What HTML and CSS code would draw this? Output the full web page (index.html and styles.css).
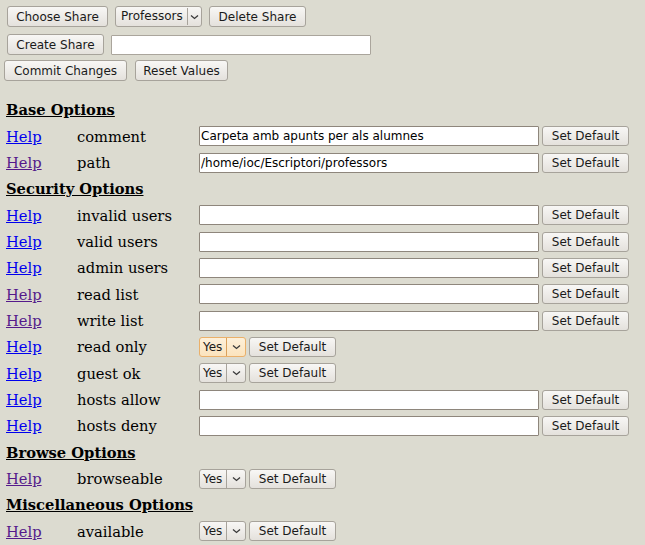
FILE: index.html
```html
<!DOCTYPE html>
<html>
<head>
<meta charset="utf-8">
<title>SWAT Shares</title>
<link rel="stylesheet" href="styles.css">
</head>
<body>
<form class="page">
  <div class="toolbar">
    <div class="tb-row tb-row1">
      <button type="button" class="btn w-choose">Choose Share</button>
      <span class="sel sel-share"><span class="sel-text">Professors</span><span class="sel-arrow"><svg width="9" height="6" viewBox="0 0 9 6"><path d="M1 1.5 L4.5 4.5 L8 1.5" fill="none" stroke="#3a3a3a" stroke-width="1.3"/></svg></span></span>
      <button type="button" class="btn w-delete">Delete Share</button>
    </div>
    <div class="tb-row tb-row2">
      <button type="button" class="btn w-create">Create Share</button>
      <input type="text" class="txt txt-new">
    </div>
    <div class="tb-row tb-row3">
      <button type="button" class="btn w-commit">Commit Changes</button>
      <button type="button" class="btn w-reset">Reset Values</button>
    </div>
  </div>

  <div class="params">
    <div class="sect"><b><u>Base Options</u></b></div>
    <a class="help" href="#h1">Help</a><span class="pname">comment</span>
    <div class="pval"><input type="text" class="txt txt-wide" value="Carpeta amb apunts per als alumnes"><button type="button" class="btn btn-def">Set Default</button></div>
    <a class="help visited" href="#h2">Help</a><span class="pname">path</span>
    <div class="pval"><input type="text" class="txt txt-wide" value="/home/ioc/Escriptori/professors"><button type="button" class="btn btn-def">Set Default</button></div>

    <div class="sect"><b><u>Security Options</u></b></div>
    <a class="help" href="#h3">Help</a><span class="pname">invalid users</span>
    <div class="pval"><input type="text" class="txt txt-wide"><button type="button" class="btn btn-def">Set Default</button></div>
    <a class="help" href="#h4">Help</a><span class="pname">valid users</span>
    <div class="pval"><input type="text" class="txt txt-wide"><button type="button" class="btn btn-def">Set Default</button></div>
    <a class="help" href="#h5">Help</a><span class="pname">admin users</span>
    <div class="pval"><input type="text" class="txt txt-wide"><button type="button" class="btn btn-def">Set Default</button></div>
    <a class="help visited" href="#h6">Help</a><span class="pname">read list</span>
    <div class="pval"><input type="text" class="txt txt-wide"><button type="button" class="btn btn-def">Set Default</button></div>
    <a class="help visited" href="#h7">Help</a><span class="pname">write list</span>
    <div class="pval"><input type="text" class="txt txt-wide"><button type="button" class="btn btn-def">Set Default</button></div>
    <a class="help" href="#h8">Help</a><span class="pname">read only</span>
    <div class="pval"><span class="sel sel-yn sel-hot"><span class="sel-text">Yes</span><span class="sel-arrow"><svg width="9" height="6" viewBox="0 0 9 6"><path d="M1 1.5 L4.5 4.5 L8 1.5" fill="none" stroke="#3a3a3a" stroke-width="1.3"/></svg></span></span><button type="button" class="btn btn-def">Set Default</button></div>
    <a class="help" href="#h9">Help</a><span class="pname">guest ok</span>
    <div class="pval"><span class="sel sel-yn"><span class="sel-text">Yes</span><span class="sel-arrow"><svg width="9" height="6" viewBox="0 0 9 6"><path d="M1 1.5 L4.5 4.5 L8 1.5" fill="none" stroke="#3a3a3a" stroke-width="1.3"/></svg></span></span><button type="button" class="btn btn-def">Set Default</button></div>
    <a class="help" href="#h10">Help</a><span class="pname">hosts allow</span>
    <div class="pval"><input type="text" class="txt txt-wide"><button type="button" class="btn btn-def">Set Default</button></div>
    <a class="help" href="#h11">Help</a><span class="pname">hosts deny</span>
    <div class="pval"><input type="text" class="txt txt-wide"><button type="button" class="btn btn-def">Set Default</button></div>

    <div class="sect"><b><u>Browse Options</u></b></div>
    <a class="help visited" href="#h12">Help</a><span class="pname">browseable</span>
    <div class="pval"><span class="sel sel-yn"><span class="sel-text">Yes</span><span class="sel-arrow"><svg width="9" height="6" viewBox="0 0 9 6"><path d="M1 1.5 L4.5 4.5 L8 1.5" fill="none" stroke="#3a3a3a" stroke-width="1.3"/></svg></span></span><button type="button" class="btn btn-def">Set Default</button></div>

    <div class="sect"><b><u>Miscellaneous Options</u></b></div>
    <a class="help visited" href="#h13">Help</a><span class="pname">available</span>
    <div class="pval"><span class="sel sel-yn"><span class="sel-text">Yes</span><span class="sel-arrow"><svg width="9" height="6" viewBox="0 0 9 6"><path d="M1 1.5 L4.5 4.5 L8 1.5" fill="none" stroke="#3a3a3a" stroke-width="1.3"/></svg></span></span><button type="button" class="btn btn-def">Set Default</button></div>
  </div>
</form>
</body>
</html>
```

FILE: styles.css
```css
html, body {
  margin: 0;
  padding: 0;
  background: #dcdbd0;
}
body {
  font-family: "DejaVu Serif", serif;
  font-size: 14.7px;
  color: #000;
}
.page {
  margin: 0;
}
.toolbar {
  display: flex;
  flex-direction: column;
  padding-top: 6px;
}
.tb-row {
  display: flex;
  align-items: center;
  gap: 7px;
}
.tb-row1 { padding-left: 7px; height: 21px; }
.tb-row2 { padding-left: 7px; height: 21px; margin-top: 7px; }
.tb-row3 { padding-left: 4px; height: 21px; margin-top: 5px; gap: 8px; }

.btn {
  font-family: "DejaVu Sans", sans-serif;
  font-size: 12px;
  color: #1a1a1a;
  height: 21px;
  padding: 0;
  margin: 0;
  border: 1px solid #a7a39b;
  border-radius: 3px;
  background: linear-gradient(#f8f7f5, #e4e1dc);
  box-sizing: border-box;
  line-height: 18px;
}
.w-choose { width: 101px; }
.w-delete { width: 97px; }
.w-create { width: 97px; }
.w-commit { width: 123px; }
.w-reset { width: 93px; }
.txt {
  font-family: "DejaVu Sans", sans-serif;
  font-size: 12px;
  color: #000;
  height: 20px;
  margin: 0;
  padding: 0 1px;
  border: 1px solid #8e867c;
  border-radius: 1px;
  background: #fff;
  box-sizing: border-box;
  outline: none;
}
.txt-new {
  width: 260px;
  border-color: #aaa59c;
}
.sel {
  display: inline-flex;
  align-items: center;
  height: 21px;
  box-sizing: border-box;
  border: 1px solid #a7a39b;
  border-radius: 3px;
  background: linear-gradient(#f8f7f5, #e4e1dc);
  font-family: "DejaVu Sans", sans-serif;
  font-size: 12px;
  color: #1a1a1a;
}
.sel-text {
  padding: 0 4px 0 5px;
  line-height: 17px;
  border-right: 1px solid #a7a39b;
}
.sel-arrow {
  display: flex;
  align-items: center;
  justify-content: center;
  flex: 1;
}
.sel-share { width: 87px; }
.sel-yn { width: 47px; height: 20px; }
.sel-yn .sel-text { padding: 1px 4px 0 3px; }
.sel-hot {
  background: linear-gradient(#fdf0da, #fbe3bd);
  border-color: #eab06a;
}
.sel-hot .sel-text { border-right-color: #d9a15c; }

.params {
  display: grid;
  grid-template-columns: 71px 122px 1fr;
  grid-auto-rows: 26.333px;
  align-items: center;
  padding-left: 6px;
  margin-top: 15.8px;
}
.sect {
  grid-column: 1 / -1;
  font-weight: bold;
}
.help {
  color: #0000ee;
}
.help.visited {
  color: #551a8b;
}
.pname {
  white-space: nowrap;
}
.pval {
  display: flex;
  align-items: center;
  gap: 3px;
}
.txt-wide {
  width: 340px;
}
.btn-def {
  height: 20px;
  width: 87px;
  padding: 0;
}
```
